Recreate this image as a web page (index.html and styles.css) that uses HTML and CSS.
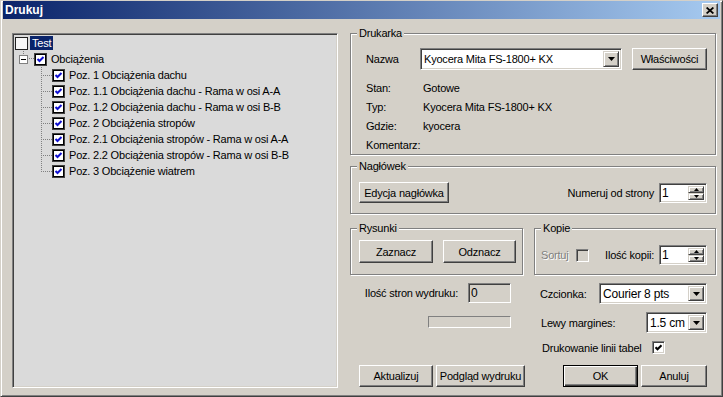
FILE: index.html
```html
<!DOCTYPE html>
<html lang="pl">
<head>
    <meta charset="UTF-8">
    <meta name="viewport" content="width=device-width, initial-scale=1.0">
    <title>Drukuj</title>
    <link rel="stylesheet" href="styles.css">
</head>
<body>

    <div class="window">

        <!-- Title bar -->
        <div class="titlebar">
            <span class="title">Drukuj</span>
            <span class="close-btn">
                <svg width="8" height="7" viewBox="0 0 8 7"><path d="M0.6 0.5 L7.4 6.5 M7.4 0.5 L0.6 6.5" stroke="#000" stroke-width="1.7"/></svg>
            </span>
        </div>

        <div class="dialog">

            <!-- Tree with the list of sections -->
            <div class="tree">
                <div class="node root">
                    <span class="tree-check empty"></span>
                    <span class="node-label selected">Test</span>
                </div>
                <div class="node level1">
                    <span class="expander"><span class="exp-box"></span></span>
                    <span class="twig"></span>
                    <span class="tree-check"><svg width="9" height="9" viewBox="0 0 9 9"><polyline points="1.5,4 3.5,6 7.5,2" fill="none" stroke="#1010d0" stroke-width="2"/></svg></span>
                    <span class="node-label">Obciążenia</span>
                </div>
                <div class="node level2">
                    <span class="branch"></span>
                    <span class="tree-check"><svg width="9" height="9" viewBox="0 0 9 9"><polyline points="1.5,4 3.5,6 7.5,2" fill="none" stroke="#1010d0" stroke-width="2"/></svg></span>
                    <span class="node-label">Poz. 1 Obciążenia dachu</span>
                </div>
                <div class="node level2">
                    <span class="branch"></span>
                    <span class="tree-check"><svg width="9" height="9" viewBox="0 0 9 9"><polyline points="1.5,4 3.5,6 7.5,2" fill="none" stroke="#1010d0" stroke-width="2"/></svg></span>
                    <span class="node-label">Poz. 1.1 Obciążenia dachu - Rama w osi A-A</span>
                </div>
                <div class="node level2">
                    <span class="branch"></span>
                    <span class="tree-check"><svg width="9" height="9" viewBox="0 0 9 9"><polyline points="1.5,4 3.5,6 7.5,2" fill="none" stroke="#1010d0" stroke-width="2"/></svg></span>
                    <span class="node-label">Poz. 1.2 Obciążenia dachu - Rama w osi B-B</span>
                </div>
                <div class="node level2">
                    <span class="branch"></span>
                    <span class="tree-check"><svg width="9" height="9" viewBox="0 0 9 9"><polyline points="1.5,4 3.5,6 7.5,2" fill="none" stroke="#1010d0" stroke-width="2"/></svg></span>
                    <span class="node-label">Poz. 2 Obciążenia stropów</span>
                </div>
                <div class="node level2">
                    <span class="branch"></span>
                    <span class="tree-check"><svg width="9" height="9" viewBox="0 0 9 9"><polyline points="1.5,4 3.5,6 7.5,2" fill="none" stroke="#1010d0" stroke-width="2"/></svg></span>
                    <span class="node-label">Poz. 2.1 Obciążenia stropów - Rama w osi A-A</span>
                </div>
                <div class="node level2">
                    <span class="branch"></span>
                    <span class="tree-check"><svg width="9" height="9" viewBox="0 0 9 9"><polyline points="1.5,4 3.5,6 7.5,2" fill="none" stroke="#1010d0" stroke-width="2"/></svg></span>
                    <span class="node-label">Poz. 2.2 Obciążenia stropów - Rama w osi B-B</span>
                </div>
                <div class="node level2 last">
                    <span class="branch"></span>
                    <span class="tree-check"><svg width="9" height="9" viewBox="0 0 9 9"><polyline points="1.5,4 3.5,6 7.5,2" fill="none" stroke="#1010d0" stroke-width="2"/></svg></span>
                    <span class="node-label">Poz. 3 Obciążenie wiatrem</span>
                </div>
            </div>

            <!-- Settings column -->
            <div class="side">

                <!-- Printer -->
                <div class="group printer">
                    <span class="group-title">Drukarka</span>
                    <div class="printer-row">
                        <span class="printer-label">Nazwa</span>
                        <div class="field combo printer-combo">
                            <span class="combo-text">Kyocera Mita FS-1800+ KX</span>
                            <span class="drop"><svg width="7" height="4" viewBox="0 0 7 4"><path d="M0 0h7L3.5 4z"/></svg></span>
                        </div>
                        <span class="btn props-btn">Właściwości</span>
                    </div>
                    <div class="info">
                        <div class="info-row"><span class="info-key">Stan:</span><span>Gotowe</span></div>
                        <div class="info-row"><span class="info-key">Typ:</span><span>Kyocera Mita FS-1800+ KX</span></div>
                        <div class="info-row"><span class="info-key">Gdzie:</span><span>kyocera</span></div>
                        <div class="info-row"><span class="info-key">Komentarz:</span><span></span></div>
                    </div>
                </div>

                <!-- Header -->
                <div class="group heading">
                    <span class="group-title">Nagłówek</span>
                    <div class="heading-row">
                        <span class="btn edit-btn">Edycja nagłówka</span>
                        <span class="spin-label">Numeruj od strony</span>
                        <div class="field spin">
                            <span class="spin-text">1</span>
                            <span class="spin-btns">
                                <span class="spin-btn"><svg width="5" height="3" viewBox="0 0 5 3"><path d="M2.5 0L5 3H0z"/></svg></span>
                                <span class="spin-btn"><svg width="5" height="3" viewBox="0 0 5 3"><path d="M0 0h5L2.5 3z"/></svg></span>
                            </span>
                        </div>
                    </div>
                </div>

                <!-- Drawings and copies -->
                <div class="pair">
                    <div class="group drawings">
                        <span class="group-title">Rysunki</span>
                        <div class="drawings-row">
                            <span class="btn mark-btn">Zaznacz</span>
                            <span class="btn unmark-btn">Odznacz</span>
                        </div>
                    </div>
                    <div class="group copies">
                        <span class="group-title">Kopie</span>
                        <div class="copies-row">
                            <span class="disabled">Sortuj</span>
                            <span class="checkbox off sort-check"></span>
                            <span class="spin-label copies-label">Ilość kopii:</span>
                            <div class="field spin">
                                <span class="spin-text">1</span>
                                <span class="spin-btns">
                                    <span class="spin-btn"><svg width="5" height="3" viewBox="0 0 5 3"><path d="M2.5 0L5 3H0z"/></svg></span>
                                    <span class="spin-btn"><svg width="5" height="3" viewBox="0 0 5 3"><path d="M0 0h5L2.5 3z"/></svg></span>
                                </span>
                            </div>
                        </div>
                    </div>
                </div>

                <!-- Bottom options and buttons -->
                <div class="bottom">
                    <div class="col-left">
                        <div class="pages-row">
                            <span class="pages-label">Ilość stron wydruku:</span>
                            <div class="field readonly pages-field">0</div>
                        </div>
                        <div class="progress"></div>
                        <div class="buttons">
                            <span class="btn refresh-btn">Aktualizuj</span>
                            <span class="btn preview-btn">Podgląd wydruku</span>
                        </div>
                    </div>
                    <div class="col-right">
                        <div class="opt-row font-row">
                            <span>Czcionka:</span>
                            <div class="field combo font-combo">
                                <span class="combo-text">Courier 8 pts</span>
                                <span class="drop"><svg width="7" height="4" viewBox="0 0 7 4"><path d="M0 0h7L3.5 4z"/></svg></span>
                            </div>
                        </div>
                        <div class="opt-row margin-row">
                            <span>Lewy margines:</span>
                            <div class="field combo margin-combo">
                                <span class="combo-text">1.5 cm</span>
                                <span class="drop"><svg width="7" height="4" viewBox="0 0 7 4"><path d="M0 0h7L3.5 4z"/></svg></span>
                            </div>
                        </div>
                        <div class="lines-row">
                            <span>Drukowanie linii tabel</span>
                            <span class="checkbox lines-check"><svg width="7" height="7" viewBox="0 0 7 7"><polyline points="0.5,3.2 2.5,5.2 6.5,1.2" fill="none" stroke="#000" stroke-width="2.1"/></svg></span>
                        </div>
                        <div class="buttons buttons-right">
                            <span class="btn default ok-btn">OK</span>
                            <span class="btn cancel-btn">Anuluj</span>
                        </div>
                    </div>
                </div>

            </div>
        </div>
    </div>

</body>
</html>
```

FILE: styles.css
```css
* {
    margin: 0;
    padding: 0;
    box-sizing: border-box;
}

body {
    width: 723px;
    height: 397px;
    overflow: hidden;
    background: #d4d0c8;
    font-family: 'Liberation Sans', Arial, sans-serif;
    font-size: 11px;
    letter-spacing: -0.2px;
    color: #000;
}

.window {
    width: 723px;
    height: 397px;
    display: flex;
    flex-direction: column;
    background: #d4d0c8;
    border: 1px solid;
    border-color: #d4d0c8 #404040 #404040 #d4d0c8;
    box-shadow: inset 1px 1px #fff, inset -1px -1px #808080;
    padding: 0 2px;
}

/* Title bar */
.titlebar {
    height: 18px;
    display: flex;
    align-items: center;
    justify-content: space-between;
    padding: 0 2px 0 2px;
    background: linear-gradient(to right, #0a246a, #a6caf0);
}

.title {
    color: #fff;
    font-weight: bold;
    font-size: 12px;
    letter-spacing: 0;
}

.close-btn {
    width: 16px;
    height: 14px;
    display: flex;
    align-items: center;
    justify-content: center;
    background: #d4d0c8;
    border: 1px solid;
    border-color: #fff #404040 #404040 #fff;
    box-shadow: inset -1px -1px #808080;
}

.dialog {
    flex: 1;
    display: flex;
    padding: 14px 0 0 9px;
}

/* Tree */
.tree {
    width: 326px;
    height: 355px;
    background: #dadada;
    border: 1px solid;
    border-color: #808080 #fff #fff #808080;
    box-shadow: inset 1px 1px #404040, inset -1px -1px #d4d0c8;
    padding: 1px 0 0 2px;
}

.node {
    height: 16px;
    display: flex;
    align-items: center;
}

.tree-check {
    width: 13px;
    height: 13px;
    flex: none;
    display: flex;
    align-items: center;
    justify-content: center;
    background: #fff;
    border: 1px solid #404040;
    box-shadow: inset 0 0 0 1px #000;
}

.tree-check.empty {
    background: #f6f6f6;
    border-color: #202020;
    box-shadow: none;
}

.node-label {
    margin-left: 4px;
    white-space: nowrap;
}

.node-label.selected {
    margin-left: 2px;
    padding: 0 2px;
    line-height: 14px;
    background: #0a246a;
    color: #fff;
}

.level1 {
    padding-left: 4px;
}

.expander {
    width: 9px;
    height: 16px;
    display: flex;
    align-items: center;
    background: repeating-linear-gradient(to bottom, #808080 0 1px, transparent 1px 2px) 4px 0 / 1px 4px no-repeat;
}

.exp-box {
    width: 9px;
    height: 9px;
    border: 1px solid #808080;
    background: #fff linear-gradient(#000, #000) 1px 3px / 5px 1px no-repeat;
}

.twig {
    width: 6px;
    height: 16px;
    background: repeating-linear-gradient(to right, #808080 0 1px, transparent 1px 2px) 1px 7px / 100% 1px no-repeat;
}

.level2 {
    padding-left: 26px;
}

.branch {
    width: 11px;
    height: 16px;
    flex: none;
    background:
        repeating-linear-gradient(to bottom, #808080 0 1px, transparent 1px 2px) 0 0 / 1px 100% no-repeat,
        repeating-linear-gradient(to right, #808080 0 1px, transparent 1px 2px) 2px 8px / 100% 1px no-repeat;
}

.level2.last .branch {
    background:
        repeating-linear-gradient(to bottom, #808080 0 1px, transparent 1px 2px) 0 0 / 1px 9px no-repeat,
        repeating-linear-gradient(to right, #808080 0 1px, transparent 1px 2px) 2px 8px / 100% 1px no-repeat;
}

/* Right column */
.side {
    width: 366px;
    margin-left: 12px;
    display: flex;
    flex-direction: column;
}

.group {
    --pad: 0px;
    display: flex;
    flex-direction: column;
    border: 1px solid #808080;
    box-shadow: inset 1px 1px #fff, 1px 1px #fff;
    padding-left: var(--pad);
}

.group-title {
    align-self: flex-start;
    margin: -8px 0 0 calc(6px - var(--pad));
    padding: 0 2px;
    line-height: 14px;
    background: #d4d0c8;
}

/* Common controls */
.btn {
    height: 22px;
    display: flex;
    align-items: center;
    justify-content: center;
    flex: none;
    background: #d4d0c8;
    border: 1px solid;
    border-color: #fff #404040 #404040 #fff;
    box-shadow: inset -1px -1px #808080;
    white-space: nowrap;
}

.btn.default {
    border-color: #000;
    box-shadow: inset 1px 1px #fff, inset -1px -1px #404040, inset -2px -2px #808080;
}

.field {
    display: flex;
    align-items: center;
    flex: none;
    background: #fff;
    border: 1px solid;
    border-color: #808080 #fff #fff #808080;
    box-shadow: inset 1px 1px #404040, inset -1px -1px #d4d0c8;
    padding: 2px;
}

.combo-text {
    flex: 1;
    padding-left: 1px;
    white-space: nowrap;
}

.drop {
    width: 16px;
    height: 100%;
    display: flex;
    align-items: center;
    justify-content: center;
    background: #d4d0c8;
    border: 1px solid;
    border-color: #d4d0c8 #404040 #404040 #d4d0c8;
    box-shadow: inset 1px 1px #fff, inset -1px -1px #808080;
}

.spin {
    width: 48px;
    height: 20px;
}

.spin-text {
    flex: 1;
    font-size: 12px;
}

.spin-btns {
    width: 16px;
    height: 100%;
    display: flex;
    flex-direction: column;
}

.spin-btn {
    flex: 1;
    display: flex;
    align-items: center;
    justify-content: center;
    background: #d4d0c8;
    border: 1px solid;
    border-color: #d4d0c8 #404040 #404040 #d4d0c8;
    box-shadow: inset 1px 1px #fff, inset -1px -1px #808080;
}

.checkbox {
    width: 13px;
    height: 13px;
    flex: none;
    display: flex;
    align-items: center;
    justify-content: center;
    background: #fff;
    border: 1px solid;
    border-color: #808080 #fff #fff #808080;
    box-shadow: inset 1px 1px #404040, inset -1px -1px #d4d0c8;
}

.checkbox.off {
    background: #d4d0c8;
}

.disabled {
    color: #808080;
    text-shadow: 1px 1px #fff;
}

/* Printer group */
.printer {
    --pad: 15px;
    height: 122px;
    padding-right: 8px;
}

.printer-row {
    display: flex;
    align-items: center;
    margin-top: 8px;
    height: 22px;
}

.printer-label {
    width: 54px;
}

.printer-combo {
    width: 202px;
    height: 22px;
}

.props-btn {
    width: 75px;
    margin-left: 10px;
}

.info {
    margin-top: 9px;
}

.info-row {
    display: flex;
    line-height: 19px;
}

.info-key {
    width: 57px;
}

/* Header group */
.heading {
    --pad: 8px;
    height: 48px;
    margin-top: 11px;
    padding-right: 8px;
}

.heading-row {
    display: flex;
    align-items: center;
    margin-top: 9px;
    height: 21px;
}

.edit-btn {
    width: 90px;
    height: 21px;
}

.spin-label {
    margin-left: auto;
    margin-right: 5px;
}

/* Drawings / copies */
.pair {
    display: flex;
    gap: 11px;
    margin-top: 14px;
}

.drawings {
    --pad: 8px;
    width: 173px;
    height: 47px;
}

.drawings-row {
    display: flex;
    gap: 10px;
    margin-top: 5px;
}

.mark-btn {
    width: 74px;
    height: 23px;
}

.unmark-btn {
    width: 73px;
    height: 23px;
}

.copies {
    --pad: 6px;
    width: 182px;
    height: 47px;
    padding-right: 8px;
}

.copies-row {
    display: flex;
    align-items: center;
    height: 20px;
    margin-top: 10px;
}

.sort-check {
    margin-left: 7px;
}

/* Bottom */
.bottom {
    display: flex;
    gap: 8px;
    margin-top: 8px;
    height: 104px;
}

.col-left {
    width: 176px;
    display: flex;
    flex-direction: column;
}

.pages-row {
    display: flex;
    justify-content: flex-end;
    align-items: center;
    height: 20px;
    padding-right: 15px;
}

.pages-label {
    margin-right: 10px;
}

.readonly {
    background: #d4d0c8;
    font-size: 12px;
}

.pages-field {
    width: 43px;
    height: 20px;
}

.progress {
    align-self: flex-end;
    width: 83px;
    height: 12px;
    margin: 13px 15px 0 0;
    border: 1px solid;
    border-color: #808080 #fff #fff #808080;
}

.buttons {
    display: flex;
    gap: 3px;
    margin-top: auto;
    padding-left: 9px;
}

.refresh-btn {
    width: 74px;
}

.preview-btn {
    width: 89px;
}

.col-right {
    width: 182px;
    display: flex;
    flex-direction: column;
}

.opt-row {
    display: flex;
    align-items: center;
    height: 21px;
    padding: 0 9px 0 6px;
}

.opt-row .combo {
    margin-left: auto;
    height: 21px;
}

.font-combo {
    width: 108px;
    font-size: 12px;
}

.margin-row {
    margin-top: 8px;
    padding-left: 7px;
}

.margin-combo {
    width: 61px;
    font-size: 12px;
}

.lines-row {
    display: flex;
    align-items: center;
    height: 13px;
    margin-top: 8px;
    padding-left: 8px;
}

.lines-check {
    margin-left: 10px;
}

.buttons-right {
    justify-content: flex-end;
    padding: 0 9px 0 0;
}

.ok-btn {
    width: 75px;
}

.cancel-btn {
    width: 66px;
}
```
